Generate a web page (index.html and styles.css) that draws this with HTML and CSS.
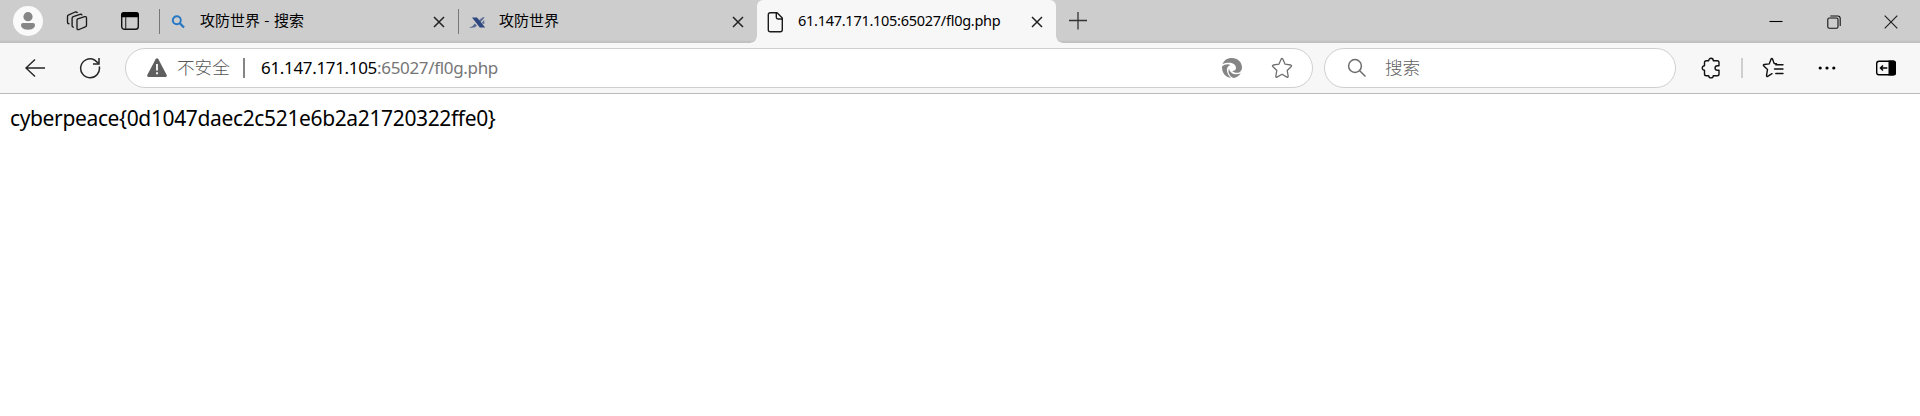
FILE: index.html
```html
<!DOCTYPE html>
<html lang="zh-CN">
<head>
<meta charset="utf-8">
<title>61.147.171.105:65027/fl0g.php</title>
<link rel="stylesheet" href="styles.css">
</head>
<body>
<header class="tabstrip">
  <div class="strip-tools">
    <span class="avatar"><svg width="30" height="30" viewBox="0 0 30 30" fill="#868686"><circle cx="15" cy="10.7" r="4.6"/><path d="M10 17h10q2 0 2 2c0 3-3 4.700-7 4.700S8 22 8 19q0-2 2-2z"/></svg></span>
    <svg class="workspaces" width="22" height="22" viewBox="0 0 22 22" fill="none" stroke="#1b1b1b" stroke-width="1.350" stroke-linejoin="round" stroke-linecap="round"><path d="M11.700 8.800l7-2.100q1.800-.4 1.800 1.300v7.200q0 1.200-1.200 1.600l-6.300 2.700q-2 .7-2-1.300v-7.800q0-1.200.7-1.600z"/><path d="M7.300 17.200q-1.200-.1-1.200-1.500V8.400q0-1.300 1.200-1.700l6.700-2.300q1.500-.4 1.900.5"/><path d="M3 13.700q-1.500 0-1.500-1.500V6.500q0-1.300 1.200-1.700l6.500-2.800q1.300-.5 2 .5"/></svg>
    <svg class="tabmenu" width="20" height="20" viewBox="0 0 20 20"><rect x="1.700" y="1.700" width="16.600" height="16.600" rx="2.800" fill="none" stroke="#111" stroke-width="1.400"/><path d="M1 6.300V4q0-3 3-3h12q3 0 3 3v2.300z" fill="#000"/><path d="M5.700 6v12" stroke="#333" stroke-width="1.200"/></svg>
  </div>
  <nav class="tabs">
    <div class="tab">
      <svg class="favicon" width="20" height="22" viewBox="0 0 20 22" fill="none" stroke="#2677c4"><circle cx="6.800" cy="9.300" r="4" stroke-width="1.900"/><path d="M9.800 12.300l4.200 4.200" stroke-width="2.300"/></svg>
      <span class="tab-title">攻防世界 - 搜索</span>
      <svg class="close" width="12" height="12" viewBox="0 0 12 12"><path d="M1 1l10 10M11 1L1 11"/></svg>
    </div>
    <div class="tab">
      <svg class="favicon" width="20" height="22" viewBox="0 0 20 22" fill="#2f477f"><path d="M3 6.500h5l8.200 10h-5.400z"/><path d="M0 16.500q4-.6 5.500-4l2.500 2q-2 3-8 2z" opacity=".75"/><path d="M9.800 9.200l4-3h2l-4.200 5zM12.300 12.200l3-3.200v4z" opacity=".7"/></svg>
      <span class="tab-title">攻防世界</span>
      <svg class="close" width="12" height="12" viewBox="0 0 12 12"><path d="M1 1l10 10M11 1L1 11"/></svg>
    </div>
    <div class="tab active">
      <svg class="favicon" width="20" height="22" viewBox="0 0 20 22" fill="none" stroke="#1a1a1a" stroke-width="1.400" stroke-linejoin="round"><path d="M2.300 1.700h6.800l5.200 5.200v11.800q0 2-2 2h-10q-2 0-2-2v-15q0-2 2-2z"/><path d="M8.300 2v4.300q0 1.700 1.700 1.700h4.300"/></svg>
      <span class="tab-title latin">61.147.171.105:65027/fl0g.php</span>
      <svg class="close" width="12" height="12" viewBox="0 0 12 12"><path d="M1 1l10 10M11 1L1 11"/></svg>
    </div>
  </nav>
  <svg class="newtab" width="18" height="18" viewBox="0 0 18 18" stroke="#333" stroke-width="1.300"><path d="M0 8.500h18M9 0v17.500"/></svg>
  <div class="window-buttons">
    <svg width="14" height="14" viewBox="0 0 14 14" stroke="#000" stroke-width="1.100"><path d="M.5 6.500h13"/></svg>
    <svg width="14" height="14" viewBox="0 0 14 14" fill="none" stroke="#111" stroke-width="1.100"><rect x=".8" y="3" width="10.200" height="10.200" rx="1.500"/><path d="M3.300 1h7.400q2.500 0 2.500 2.500v7.500"/></svg>
    <svg width="14" height="14" viewBox="0 0 14 14" stroke="#222" stroke-width="1.200"><path d="M.7.700l12.600 12.600M13.300.7L.7 13.300"/></svg>
  </div>
</header>
<div class="toolbar">
  <svg class="back" width="22" height="20" viewBox="0 0 22 20" fill="none" stroke="#262626" stroke-width="1.400"><path d="M21 10H2M11 1.500L2 10l9 8.500"/></svg>
  <svg class="reload" width="22" height="22" viewBox="0 0 22 22" fill="none" stroke="#262626" stroke-width="1.500"><path d="M20.300 9.500A9.400 9.400 0 1 1 15.500 3L19.500 6.300"/><path d="M20 1v6h-6"/></svg>
  <div class="address">
    <svg class="warning" width="20" height="20" viewBox="0 0 20 20"><path d="M8.600 1.200q1.400-1.700 2.800 0l8.200 15.500q.8 2.300-1.400 2.300H1.800q-2.200 0-1.400-2.300z" fill="#5f5f5f"/><path d="M10 6v6.500M10 14.200v2" stroke="#fff" stroke-width="1.800"/></svg>
    <span class="security">不安全</span>
    <span class="address-rule"></span>
    <span class="url"><span class="host">61.147.171.105</span>:65027/fl0g.php</span>
    <svg class="engine" width="22" height="22" viewBox="0 0 22 22" fill="#858585"><path d="M1.500 7C3.500 2.500 7 1 11 1c5.500 0 10 4 10 9.500 0 3-2 5.300-5 5.300-2 0-4-.8-4.800-1.800 2 .2 3.800-1 3.800-3 0-3.500-3.500-5.200-7-5.200-2.500 0-4.500.3-6.500 1.200z"/><path d="M1 9.500c2.500-2.200 6-2.700 8.500-1.500C6.500 9 5.500 11.500 6 14c.5 3 2 5.300 4 6.800C4.500 20.500.8 16 1 9.500z"/><path d="M8 11.500c.5 3.500 3.700 5.800 7.500 5.800 1.800 0 3.200-.4 4.300-1.200-1.600 3-4.500 4.900-7.300 4.900C8.500 19.500 6.500 15 8 11.500z"/></svg>
    <svg class="star" width="22" height="22" viewBox="0 0 22 22" fill="none" stroke="#707070" stroke-width="1.300" stroke-linejoin="round"><path d="M10.200 2q.8-1 1.600 0l2.300 5.200 5.700.8q1.300.4.400 1.500l-4 4 1 5.800q0 1.300-1.300.8L11 17.200l-5 2.900q-1.300.5-1.200-.8l1-5.800-4-4Q.9 8.400 2.200 8l5.700-.8z"/></svg>
  </div>
  <div class="search">
    <svg width="20" height="20" viewBox="0 0 20 20" fill="none" stroke="#6c6c6c" stroke-width="1.500"><circle cx="8" cy="8" r="6.400"/><path d="M12.500 12.500l6 6"/></svg>
    <span>搜索</span>
  </div>
  <svg class="extensions" width="20" height="22" viewBox="0 0 20 22" fill="none" stroke="#111" stroke-width="1.400" stroke-linejoin="round"><path d="M7.700 3.700c0-3.200 4.600-3.200 4.600 0h3.900q1.800 0 1.800 1.800v3.200h-1.500c-3.300 0-3.300 4.600 0 4.600H18v3.700q0 1.800-1.800 1.800h-3.900c0 2.800-4.600 2.800-4.600 0H5.300q-1.800 0-1.800-1.800v-3.700c-3 0-3-4.600 0-4.600V5.500q0-1.800 1.800-1.800z"/></svg>
  <span class="toolbar-rule"></span>
  <svg class="favorites" width="22" height="22" viewBox="0 0 22 22" fill="none" stroke="#111" stroke-width="1.400" stroke-linejoin="round" stroke-linecap="round"><path d="M14.500 6.700l-2.300-.2L10.500 2q-.7-1.100-1.400 0L7.200 6.900l-5 .6q-1.500.4-.4 1.500l3.700 3.600-1 6q0 1.200 1.200.7l4.300-2.600"/><path d="M13.800 7.700H21M12.500 12H21M13.800 16.500H21"/></svg>
  <svg class="more" width="18" height="6" viewBox="0 0 18 6"><circle cx="2.200" cy="3" r="1.600"/><circle cx="9" cy="3" r="1.600"/><circle cx="15.800" cy="3" r="1.600"/></svg>
  <svg class="sidebar" width="22" height="16" viewBox="0 0 22 16"><rect x="1.700" y="1.200" width="18.600" height="13.600" rx="2.300" fill="none" stroke="#000" stroke-width="1.400"/><path d="M13.500.5h5q2.500 0 2.500 2.500v10q0 2.500-2.500 2.500h-5z"/><path d="M12.300 8H5.500M8 5.500L5.500 8 8 10.500" fill="none" stroke="#000" stroke-width="1.500"/></svg>
</div>
<main class="page"><span>cyberpeace{0d1047daec2c521e6b2a21720322ffe0}</span></main>
</body>
</html>
```
FILE: styles.css
```css
* { box-sizing: border-box; }
body {
  margin: 0;
  height: 416px;
  overflow: hidden;
  background: #fff;
  color: #000;
  font-family: "Noto Sans", "Noto Sans CJK SC", sans-serif;
  font-variant-ligatures: none;
}
svg { display: block; flex: none; }
span { white-space: nowrap; }

.tabstrip {
  display: flex;
  height: 43px;
  background: linear-gradient(#cdcdcd 40px, #c0c0c0 42px);
}
.strip-tools { display: flex; width: 159px; padding-left: 13px; }
.avatar { width: 30px; height: 30px; margin-top: 6px; border-radius: 50%; background: #fafafa; }
.workspaces { margin: 10px 0 0 23px; }
.tabmenu { margin: 11px 0 0 32px; }

.tabs { display: flex; }
.tab { display: flex; width: 299px; height: 43px; padding-left: 11px; background: linear-gradient(#777, #777) 0 9px / 1px 25px no-repeat; }
.tab.active { position: relative; height: 43px; background: #f7f7f7; border-radius: 6px 6px 0 0; }
.tab.active::before, .tab.active::after {
  content: "";
  position: absolute;
  bottom: 0;
  width: 6px;
  height: 6px;
}
.tab.active::before { left: -6px; background: radial-gradient(circle at 0 0, transparent 5px, #f7f7f7 6px); }
.tab.active::after { right: -6px; background: radial-gradient(circle at 100% 0, transparent 5px, #f7f7f7 6px); }
.favicon { margin-top: 11px; overflow: visible; }
.tab-title { width: 233px; margin: 9px 0 0 10px; font: 15px/22px "Noto Sans CJK SC", sans-serif; word-spacing: 1px; }
.tab-title.latin { font-family: "Noto Sans", sans-serif; font-size: 14.500px; letter-spacing: -0.270px; }
.close { margin-top: 16px; fill: none; stroke: #222; stroke-width: 1.500; }
.newtab { margin: 12px 0 0 13px; }
.window-buttons { display: flex; gap: 43.500px; margin: 15px 22px 0 auto; }

.toolbar {
  display: flex;
  align-items: center;
  height: 51px;
  padding-bottom: 1px;
  background: #f7f7f7;
  border-bottom: 1px solid #b9b9b9;
}
.back { margin-left: 24px; }
.reload { margin-left: 33px; }
.address, .search {
  display: flex;
  align-items: center;
  height: 40px;
  border: 1px solid #cfcfcf;
  border-radius: 20px;
  background: #fff;
}
.address { width: 1188px; margin-left: 24px; padding-left: 21px; }
.security { width: 53px; margin: -2px 0 0 10px; color: #555; font: 300 17.600px/24px "Noto Sans CJK SC", sans-serif; }
.address-rule { width: 2px; height: 20px; margin-left: 13px; background: #858585; }
.url { margin-left: 16px; color: #767676; font-size: 17px; line-height: 24px; letter-spacing: -0.330px; }
.host { color: #000; }
.engine { margin-left: auto; }
.star { margin: 0 19px 0 28px; }
.search { width: 352px; margin-left: 11px; padding-left: 22px; color: #606060; font: 300 17.600px/24px "Noto Sans CJK SC", sans-serif; }
.search span { margin: -2px 0 0 18px; }
.extensions { margin-left: 25px; }
.toolbar-rule { width: 2px; height: 20px; margin-left: 20px; background: #cfcfcf; }
.favorites { margin-left: 19px; }
.more { margin-left: 34px; }
.sidebar { margin-left: 39px; }

.page { padding: 10px; }
.page span { display: block; font-size: 21px; line-height: 28px; letter-spacing: -0.360px; }
```
